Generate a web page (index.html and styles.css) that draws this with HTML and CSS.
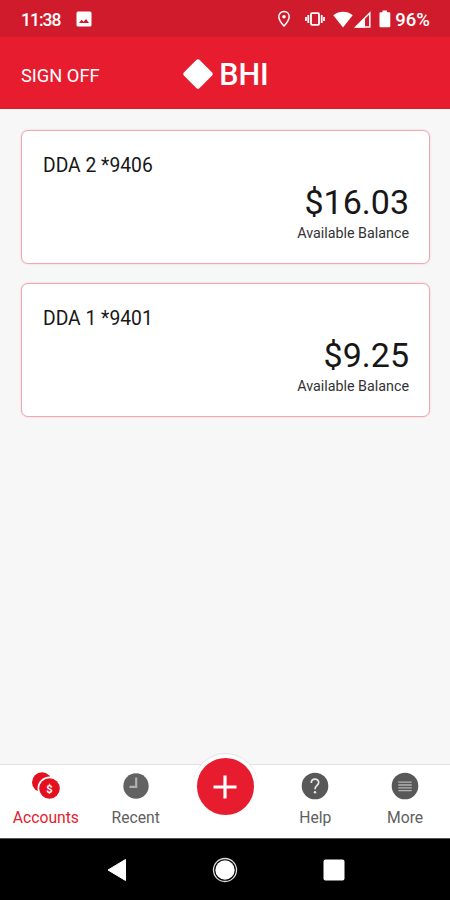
FILE: index.html
```html
<!DOCTYPE html>
<html lang="en">

<head>
    <meta charset="UTF-8">
    <meta name="viewport" content="width=device-width, initial-scale=1.0">
    <title>Accounts</title>

    <link rel="stylesheet" href="styles.css">
</head>

<body>
    <div class="app">
        <div class="statusbar">
            <span class="time">11:38</span>
            <svg class="picture" width="16" height="16" viewBox="0 0 16 16">
                <rect x="0.5" y="0.5" width="15" height="15" rx="1.5" fill="#fff" />
                <path d="M3 12l2.5-3.2 2 2 2.6-2.8L13 12z" fill="#cf1b2b" />
            </svg>
            <div class="status-icons">
                <svg width="14" height="18" viewBox="0 0 14 18">
                    <path d="M7 1.6C4 1.6 1.8 3.8 1.8 6.7 1.8 10.3 7 16 7 16s5.2-5.7 5.2-9.3C12.2 3.8 10 1.6 7 1.6z" fill="none" stroke="#fff" stroke-width="1.5" />
                    <circle cx="7" cy="6.8" r="1.8" fill="#fff" />
                </svg>
                <svg class="vibrate" width="20" height="14" viewBox="0 0 20 14">
                    <rect x="6" y="1.2" width="8" height="11.6" rx="1" fill="none" stroke="#fff" stroke-width="1.8" />
                    <path d="M3.3 3v8M16.700 3v8M1 5v4M19 5v4" stroke="#fff" stroke-width="1.8" />
                </svg>
                <svg class="wifi" width="20" height="17" viewBox="0 0 20 17">
                    <path d="M10 16.5L0.3 4.2C6-0.4 14-0.4 19.7 4.2z" fill="#fff" />
                </svg>
                <svg class="signal" width="17" height="17" viewBox="0 0 17 17">
                    <path d="M15.8 2v14H1.8z" fill="none" stroke="#fff" stroke-width="1.5" />
                    <path d="M11 6.5V16.5H1z" fill="#fff" />
                </svg>
                <svg class="battery" width="12" height="18" viewBox="0 0 12 18">
                    <path d="M3.5 0.5h4.500v1.700h2.300q1 0 1 1v13q0 1-1 1H1.500q-1 0-1-1v-13q0-1 1-1h2z" fill="#fff" />
                </svg>
                <span class="percent">96%</span>
            </div>
        </div>

        <div class="header">
            <a class="signoff">SIGN OFF</a>
            <div class="logo">
                <svg width="32" height="32" viewBox="0 0 32 32">
                    <rect x="5" y="5" width="22" height="22" rx="2" transform="rotate(45 16 16)" fill="#fff" />
                </svg>
                <span>BHI</span>
            </div>
        </div>

        <div class="accounts">
            <div class="card">
                <div class="name">DDA 2 *9406</div>
                <div class="amount">$16.03</div>
                <div class="balance">Available Balance</div>
            </div>
            <div class="card">
                <div class="name">DDA 1 *9401</div>
                <div class="amount">$9.25</div>
                <div class="balance">Available Balance</div>
            </div>
        </div>

        <div class="tabs">
            <div class="tab active">
                <svg width="30" height="28" viewBox="0 0 30 28">
                    <circle cx="11" cy="10.3" r="10" fill="#e31020" />
                    <circle cx="18.5" cy="16.5" r="12" fill="#fff" />
                    <circle cx="18.5" cy="16.5" r="10.3" fill="#e31020" />
                    <text class="coin" x="18.5" y="20.5" text-anchor="middle">$</text>
                </svg>
                <span>Accounts</span>
            </div>
            <div class="tab">
                <svg width="28" height="28" viewBox="0 0 28 28">
                    <circle cx="14" cy="14" r="12.7" fill="#626262" />
                    <path d="M14.2 5.5v9.300H7.500" fill="none" stroke="#b0b0b0" stroke-width="2.2" />
                </svg>
                <span>Recent</span>
            </div>
            <div class="tab">
                <div class="add">
                    <svg width="24" height="24" viewBox="0 0 24 24">
                        <path d="M12 0.5v23M0.5 12h23" stroke="#fff" stroke-width="3.2" />
                    </svg>
                </div>
            </div>
            <div class="tab">
                <svg width="28" height="28" viewBox="0 0 28 28">
                    <circle cx="14" cy="14" r="13.3" fill="#585858" />
                    <path d="M10.3 10.900C10.3 6 17.700 6 17.700 10.600C17.700 13.300 14 13.600 14 17.200" fill="none" stroke="#e8e8e8" stroke-width="1.7" />
                    <circle cx="14" cy="20.2" r="1.2" fill="#e8e8e8" />
                </svg>
                <span>Help</span>
            </div>
            <div class="tab">
                <svg width="28" height="28" viewBox="0 0 28 28">
                    <circle cx="14" cy="14" r="13.3" fill="#585858" />
                    <path d="M7.3 10.2h13.400M7.300 13h13.400M7.300 15.800h13.400M7.300 18.600h13.400" stroke="#b4b4b4" stroke-width="1.3" />
                </svg>
                <span>More</span>
            </div>
        </div>

        <div class="navbar">
            <svg width="20" height="24" viewBox="0 0 20 24">
                <path d="M18.5 1.500v21L1 12z" fill="#fff" stroke="#fff" stroke-linejoin="round" />
            </svg>
            <svg width="26" height="26" viewBox="0 0 26 26">
                <circle cx="13" cy="13" r="11.5" fill="none" stroke="#ddd" stroke-width="1.3" />
                <circle cx="13" cy="13" r="9.7" fill="#fff" />
            </svg>
            <svg width="22" height="22" viewBox="0 0 22 22">
                <rect x="0.5" y="0.5" width="21" height="21" rx="2" fill="#fff" />
            </svg>
        </div>
    </div>
</body>

</html>
```
FILE: styles.css
```css
body {
    margin: 0;
    background-color: #f7f7f7;
    font-family: Roboto, "Liberation Sans", sans-serif;
}

.app {
    display: flex;
    flex-direction: column;
    height: 900px;
    overflow: hidden;
}

.statusbar {
    display: flex;
    align-items: center;
    box-sizing: border-box;
    height: 37px;
    padding: 1px 20px 0 21px;
    background-color: #cf1b2b;
    color: white;
}

.time {
    width: 55px;
    font-size: 17.5px;
    font-weight: 500;
    line-height: 20px;
    letter-spacing: -1px;
    padding-top: 2px;
}

.status-icons {
    display: flex;
    align-items: center;
    margin-left: auto;
}

.vibrate {
    margin-left: 14px;
}

.wifi {
    margin-left: 8px;
}

.signal {
    margin-left: 1px;
}

.battery {
    margin-left: 8px;
}

.percent {
    margin-left: 4px;
    padding-top: 2px;
    font-size: 18.5px;
    font-weight: 500;
    line-height: 20px;
}

.header {
    display: grid;
    grid-template-columns: 1fr auto 1fr;
    align-items: center;
    box-sizing: border-box;
    height: 72px;
    padding: 2px 20px 0 21px;
    background-color: #e71d2f;
    border-bottom: 1px solid #d3202f;
    color: white;
}

.signoff {
    font-size: 18.3px;
    padding-top: 4px;
}

.logo {
    display: flex;
    align-items: center;
    gap: 5px;
    font-size: 30.5px;
    font-weight: 500;
}

.logo span {
    padding-top: 2px;
}

.accounts {
    display: flex;
    flex: 1;
    flex-direction: column;
    gap: 19px;
    padding: 21px 20px 0 21px;
}

.card {
    box-sizing: border-box;
    height: 134px;
    padding: 22px 20px 0;
    background-color: white;
    border: 1.5px solid #f1a9af;
    border-radius: 7px;
    box-shadow: 0 0 2px #e6c9cb;
    color: #171717;
}

.name {
    font-size: 19.3px;
    line-height: 26px;
    padding-left: 1px;
}

.amount {
    font-size: 34px;
    line-height: 40px;
    margin-top: 3px;
    text-align: right;
}

.balance {
    color: #333333;
    font-size: 14.3px;
    line-height: 20px;
    margin-top: 1px;
    text-align: right;
}

.tabs {
    display: grid;
    grid-template-columns: repeat(5, 1fr);
    box-sizing: border-box;
    height: 74px;
    padding-left: 1px;
    background-color: white;
    border-top: 1px solid #e2e2e2;
}

.tab {
    display: flex;
    flex-direction: column;
    align-items: center;
    padding-top: 7px;
    color: #606060;
    font-size: 15.7px;
    line-height: 20px;
}

.tab span {
    margin-top: 8px;
}

.active {
    color: #e5202e;
}

.coin {
    fill: white;
    font-size: 11px;
    font-weight: bold;
}

.add {
    display: flex;
    align-items: center;
    justify-content: center;
    width: 57px;
    height: 57px;
    margin-top: -18px;
    background-color: #e71d2f;
    border: 4px solid white;
    border-radius: 50%;
    box-shadow: 0 -1px 0 #e2e2e2;
}

.navbar {
    display: flex;
    align-items: center;
    justify-content: center;
    gap: 85px;
    box-sizing: border-box;
    height: 62px;
    padding-left: 1px;
    border-top: 1px solid #555555;
    background-color: black;
}
```
